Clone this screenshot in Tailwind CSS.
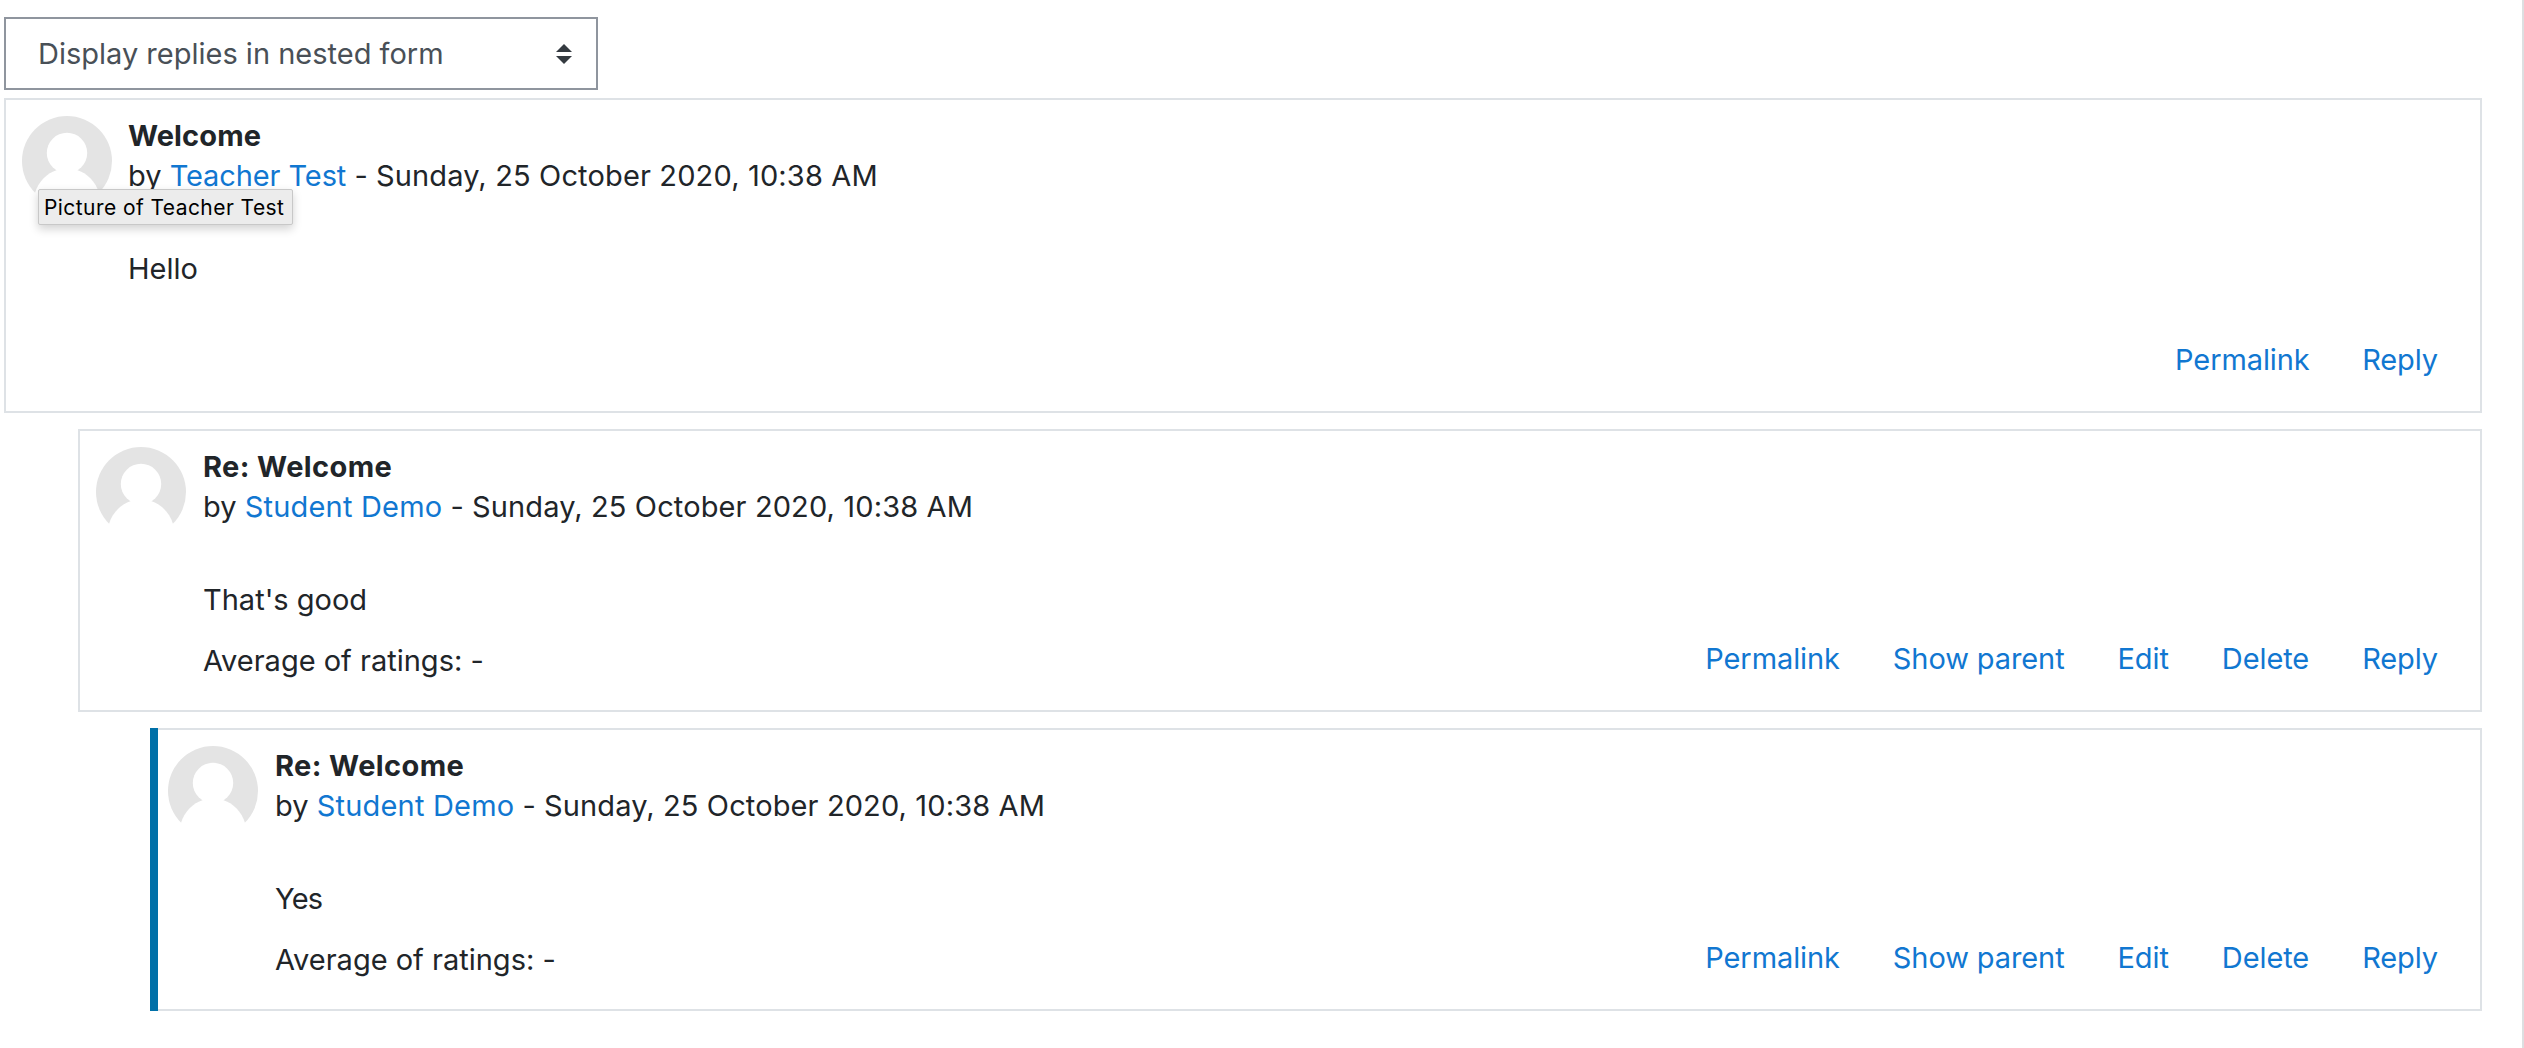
<!DOCTYPE html>
<html lang="en">
<head>
    <meta charset="UTF-8">
    <meta name="viewport" content="width=device-width, initial-scale=1.0">
    <title>Welcome</title>
    <script src="https://cdn.jsdelivr.net/npm/@tailwindcss/browser@4"></script>
</head>
<body class="bg-white font-['Inter',sans-serif] text-[29px] leading-[40px] text-[#212529]">
    <svg class="hidden">
        <symbol id="avatar" viewBox="0 0 90 90">
            <circle cx="45" cy="45" r="45" fill="#e4e4e4"/>
            <circle cx="45" cy="37" r="20.2" fill="#fff"/>
            <path d="M35 54 C25 57 16 66 13 77 V90 H77 V77 C74 66 65 57 55 54 Z" fill="#fff"/>
        </symbol>
    </svg>

    <main class="h-[1048px] border-r-2 border-[#dddfe1] pt-[17px] pl-1 pr-10">
        <!-- Display mode -->
        <div class="flex h-[73px] w-[594px] items-center justify-between border-2 border-[#8f959e] pl-8 pr-6 text-[#495057]">
            <span class="pt-px">Display replies in nested form</span>
            <svg class="h-5 w-4" viewBox="0 0 16 20" fill="#343a40">
                <path d="M0 8 L8 0 L16 8 Z M0 12 H16 L8 20 Z"/>
            </svg>
        </div>

        <!-- First post -->
        <article class="relative mt-2 flex h-[315px] border-2 border-[#dee2e6] pt-4 pl-4 pr-[42px]">
            <svg class="h-[90px] w-[90px] shrink-0"><use href="#avatar"/></svg>
            <div class="ml-4 flex-1">
                <header>
                    <h3 class="font-bold tracking-[0.1px]">Welcome</h3>
                    <div>by <a href="#" class="tracking-[-0.1px] text-[#1177d1]">Teacher Test</a> - <span class="tracking-[0.15px]">Sunday, 25 October 2020, 10:38 AM</span></div>
                </header>
                <p class="mt-[53px]">Hello</p>
                <div class="mt-[51px] flex justify-end gap-[52.5px] tracking-[-0.1px] text-[#1177d1]">
                    <a href="#">Permalink</a>
                    <a href="#">Reply</a>
                </div>
            </div>
            <div class="absolute top-[89px] left-[32px] h-[36px] w-[255px] rounded-[2px] border border-[#c8c8c8] bg-[#ececec] pl-[5px] text-[21px] leading-[36px] tracking-[0.43px] whitespace-nowrap text-black shadow-[0_4px_10px_rgba(0,0,0,0.18)]">Picture of Teacher Test</div>
        </article>

        <!-- Reply -->
        <article class="mt-4 ml-[74px] flex h-[283px] border-2 border-[#dee2e6] pt-4 pl-4 pr-[42px]">
            <svg class="h-[90px] w-[90px] shrink-0"><use href="#avatar"/></svg>
            <div class="ml-[17px] flex-1">
                <header>
                    <h3 class="font-bold tracking-[0.4px]">Re: Welcome</h3>
                    <div>by <a href="#" class="tracking-[0.2px] text-[#1177d1]">Student Demo</a> - <span class="tracking-[0.12px]">Sunday, 25 October 2020, 10:38 AM</span></div>
                </header>
                <p class="mt-[53px]">That's good</p>
                <div class="mt-[19px] flex justify-between">
                    <span class="pt-[2px]">Average of ratings: -</span>
                    <div class="flex gap-[53px] tracking-[-0.1px] text-[#1177d1]">
                        <a href="#">Permalink</a>
                        <a href="#">Show parent</a>
                        <a href="#">Edit</a>
                        <a href="#">Delete</a>
                        <a href="#">Reply</a>
                    </div>
                </div>
            </div>
        </article>

        <!-- Focused reply -->
        <article class="mt-4 ml-[146px] border-l-8 border-[#0070a8]">
            <div class="flex h-[283px] border-2 border-l-0 border-[#dee2e6] pt-4 pl-[10px] pr-[42px]">
                <svg class="h-[90px] w-[90px] shrink-0"><use href="#avatar"/></svg>
                <div class="ml-[17px] flex-1">
                    <header>
                        <h3 class="font-bold tracking-[0.4px]">Re: Welcome</h3>
                        <div>by <a href="#" class="tracking-[0.2px] text-[#1177d1]">Student Demo</a> - <span class="tracking-[0.12px]">Sunday, 25 October 2020, 10:38 AM</span></div>
                    </header>
                    <p class="mt-[53px] tracking-[-0.8px]">Yes</p>
                    <div class="mt-[19px] flex justify-between">
                        <span class="pt-[2px]">Average of ratings: -</span>
                        <div class="flex gap-[53px] tracking-[-0.1px] text-[#1177d1]">
                            <a href="#">Permalink</a>
                            <a href="#">Show parent</a>
                            <a href="#">Edit</a>
                            <a href="#">Delete</a>
                            <a href="#">Reply</a>
                        </div>
                    </div>
                </div>
            </div>
        </article>
    </main>
</body>
</html>
